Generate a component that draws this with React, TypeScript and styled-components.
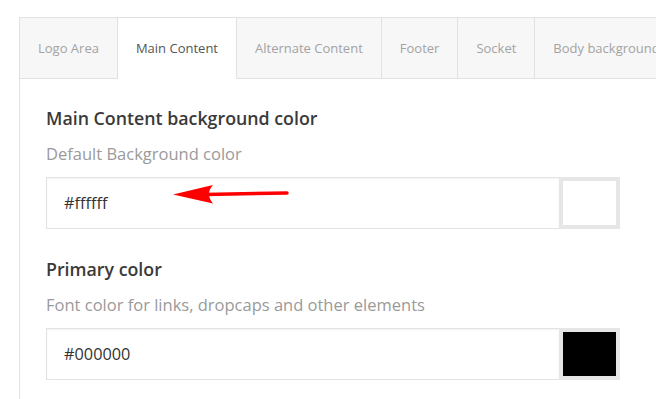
import React from "react";
import styled, { createGlobalStyle } from "styled-components";

const GlobalStyle = createGlobalStyle`
  html, body {
    margin: 0;
    padding: 0;
    background: #fff;
    overflow: hidden;
  }
  body {
    font-family: "Open Sans", "Noto Sans", sans-serif;
  }
`;

const tabs = [
  "Logo Area",
  "Main Content",
  "Alternate Content",
  "Footer",
  "Socket",
  "Body background",
];

const fields = [
  {
    title: "Main Content background color",
    desc: "Default Background color",
    value: "#ffffff",
    arrow: true,
  },
  {
    title: "Primary color",
    desc: "Font color for links, dropcaps and other elements",
    value: "#000000",
    arrow: false,
  },
];

export default function App() {
  return (
    <Page>
      <GlobalStyle />
      <Panel>
        <TabBar>
          {tabs.map((t) => (
            <Tab key={t} $active={t === "Main Content"}>
              {t}
            </Tab>
          ))}
          <TabFill />
        </TabBar>
        <Content>
          {fields.map((f) => (
            <Field key={f.title}>
              <Title>{f.title}</Title>
              <Desc>{f.desc}</Desc>
              <InputRow>
                <ColorInput defaultValue={f.value} readOnly />
                <Swatch $color={f.value} />
                {f.arrow && (
                  <Arrow width="124" height="24" viewBox="0 0 124 24">
                    <path
                      d="M36 12.5 L118 11"
                      stroke="#ff0000"
                      strokeWidth="3.5"
                      strokeLinecap="round"
                      fill="none"
                    />
                    <path
                      d="M4 12.5 L44 3 Q36 12 44 21.5 Z"
                      fill="#ff0000"
                    />
                  </Arrow>
                )}
              </InputRow>
            </Field>
          ))}
        </Content>
      </Panel>
    </Page>
  );
}

const Page = styled.div`
  padding: 17px 0 0 19px;
  width: 800px;
`;

const Panel = styled.div`
  border-left: 1px solid #e1e1e1;
  border-top: 1px solid #e1e1e1;
  min-height: 400px;
`;

const TabBar = styled.div`
  display: flex;
  height: 61px;
`;

const Tab = styled.div<{ $active?: boolean }>`
  display: flex;
  align-items: center;
  padding: 0 18px;
  font-size: 13px;
  white-space: nowrap;
  color: ${(p) => (p.$active ? "#555" : "#a3a3a3")};
  background: ${(p) => (p.$active ? "#fff" : "#f7f7f7")};
  border-right: 1px solid #e1e1e1;
  border-bottom: 1px solid ${(p) => (p.$active ? "transparent" : "#e1e1e1")};
`;

const TabFill = styled.div`
  flex: 1;
  background: #f7f7f7;
  border-bottom: 1px solid #e1e1e1;
`;

const Content = styled.div`
  padding: 26px 0 0 26px;
  display: flex;
  flex-direction: column;
  gap: 27px;
`;

const Field = styled.div`
  display: flex;
  flex-direction: column;
`;

const Title = styled.h3`
  margin: 0;
  font-size: 17.8px;
  font-weight: 600;
  color: #3a3a3a;
  line-height: 26px;
`;

const Desc = styled.p`
  margin: 12px 0 0;
  font-size: 16.5px;
  color: #9a9a9a;
  line-height: 22px;
`;

const InputRow = styled.div`
  position: relative;
  display: flex;
  width: 574px;
  height: 52px;
  margin-top: 12px;
`;

const ColorInput = styled.input`
  flex: 1;
  box-sizing: border-box;
  height: 52px;
  border: 1px solid #e3e3e3;
  border-right: none;
  box-shadow: inset 0 1px 2px rgba(0, 0, 0, 0.05);
  padding: 0 17px;
  font-family: "Open Sans", "Noto Sans", sans-serif;
  font-size: 16.3px;
  color: #333;
  outline: none;
  background: #fff;
`;

const Swatch = styled.div<{ $color: string }>`
  box-sizing: border-box;
  width: 61px;
  height: 52px;
  border: 4px solid #e6e6e6;
  background: ${(p) => p.$color};
`;

const Arrow = styled.svg`
  position: absolute;
  left: 123px;
  top: 5px;
`;
